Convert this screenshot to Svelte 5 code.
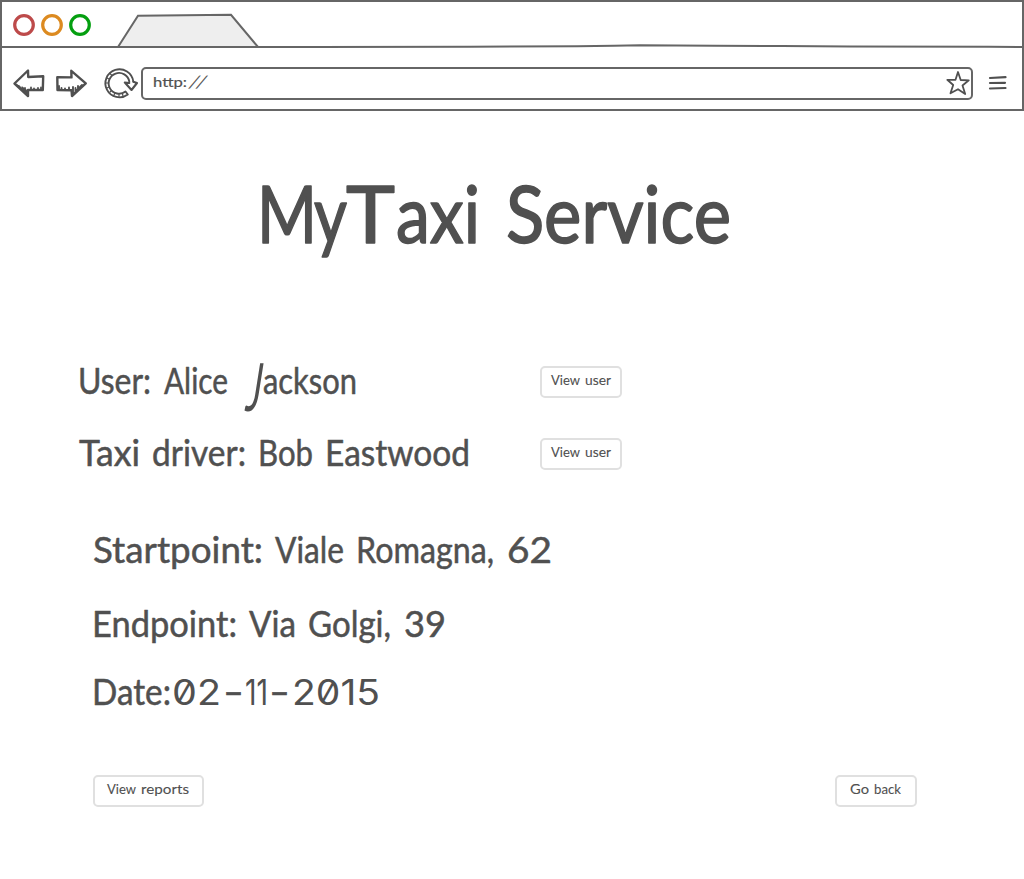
<script>
  const title = { h: 110, base: 78, size: 79, words: [['M', 257, 60], ['y', 314, 33], ['T', 346, 49], ['axi', 396, 84], ['Service', 506, 225]] };
  const people = [
    { words: [['User:', 78, 73], ['Alice', 164, 64], ['J', 241, 21, 'tall'], ['ackson', 263, 94]] },
    { words: [['Taxi', 79, 61], ['driver:', 152, 94], ['Bob', 258, 55], ['Eastwood', 325, 145]] }
  ];
  const facts = [
    { h: 74, words: [['Startpoint:', 93, 170], ['Viale', 275, 69], ['Romagna,', 356, 138], ['62', 507, 45]] },
    { h: 68, words: [['Endpoint:', 92, 145], ['Via', 249, 47], ['Golgi,', 308, 83], ['39', 404, 42]] },
    { h: 106, words: [['Date:', 92, 79], ['02', 172, 49, 'num'], ['-', 223, 21], ['11', 245, 23, 'num'], ['-', 269, 21], ['2015', 292, 88, 'num']] }
  ];
</script>

{#snippet line(words, h, base, size, stroke)}
  <svg class="line" width="1024" height={h} font-size={size} stroke-width={stroke}>
    {#each words as [word, x, len, kind]}
      {#if kind === 'tall'}
        <text transform="translate({x} {base + 17}) skewX(-9) scale(1 1.85)" x="3" y="0" textLength="15" lengthAdjust="spacingAndGlyphs" stroke-width="0">{word}</text>
      {:else}
        <text class={kind} {x} y={base} textLength={len} lengthAdjust="spacingAndGlyphs">{word}</text>
      {/if}
    {/each}
  </svg>
{/snippet}

{#snippet label(words, w)}
  <button style:width="{w}px">
    <svg class="label" width={w - 4} height="28" font-size="14" stroke-width="0.1">
      {#each words as [word, x, len]}
        <text x={x - 1} y="17" textLength={len} lengthAdjust="spacingAndGlyphs">{word}</text>
      {/each}
    </svg>
  </button>
{/snippet}

<div class="page">
  <header>
    <div class="tabs">
      <svg width="1020" height="46" viewBox="2 2 1020 46" fill="none">
        <g stroke-width="3.2">
          <circle cx="24" cy="25" r="9.3" stroke="#bd4a4a" />
          <circle cx="52" cy="25" r="9.3" stroke="#dc8a20" />
          <circle cx="80" cy="25" r="9.3" stroke="#049f10" />
        </g>
        <path d="M118 47 138 15.8 231 14.8 258 47" fill="#eee" stroke="#666" stroke-width="2" />
        <path d="M0 47H316L470 46.7 577 46.3 614 45.8 640 45.2 714 45.8 782 46.1 850 46.4 989 46.8 1024 47" stroke="#666" stroke-width="2" />
      </svg>
    </div>
    <div class="tools">
      <svg class="nav" width="128" height="40" viewBox="12 63 128 40" fill="none" stroke="#505050" stroke-width="2.4" stroke-linejoin="round" stroke-linecap="round">
        <path d="M14.500 83.500 28 70.500 28.200 77 43.200 76.300 42.800 90 28 90 28 96Z" />
        <path d="M17 85 27.500 95 27.500 91 22 87 22.500 90 19.500 86Z" fill="#505050" stroke-width="1.200" />
        <path d="M25 88V91M31 87.500V89M34 88.500V89.500M38 88V89M41 87.500V89" stroke-width="1.800" />
        <path d="M57.300 77.200 71.500 77.400 71.300 70.800 85.800 83.300 72 96 71.500 90.200 57.500 90Z" />
        <path d="M59 86V89M61.500 88V89M65 88.500V89M69 87.500V89M73 87V94M75.500 88V92M78 86V89M82 85 73.500 93.500" stroke-width="1.900" />
        <path d="M129.300 81.500A10.400 10.400 0 1 0 125.500 91.500L127.800 94.500A14 14 0 1 1 133.300 81.500" stroke-width="1.900" />
        <path d="M124.800 82.500 129.300 83M133.300 81.800 137 83 131.500 90 124.800 82.500" stroke-width="2.100" />
        <path d="M107 78 109 79M106 83H108M107 88 109 87M110 92 111.500 90.500M114 95 115 93M119 96.500V94.500M123 96 122.500 94M110 73.500 111.500 75" stroke-width="1.200" />
      </svg>
      <div class="address">
        <svg class="url" width="70" height="29" font-size="14" stroke-width="0.2">
          <text x="10" y="18" textLength="34" lengthAdjust="spacingAndGlyphs">http:</text>
          <text transform="translate(45 19) skewX(-24)" font-size="17" textLength="15" lengthAdjust="spacing">//</text>
        </svg>
        <svg width="26" height="29" viewBox="945 69 26 29" fill="none" stroke="#505050" stroke-width="1.800" stroke-linejoin="round">
          <path d="M958 72 960.700 80 968.800 80.300 962.500 85.500 965.200 94 958 89.200 950.500 93.300 953.200 85 947.300 79.800 955.500 79.800Z" />
        </svg>
      </div>
      <svg class="menu" width="20" height="20" viewBox="988 73 20 20" fill="none" stroke="#505050" stroke-width="2.200" stroke-linecap="round">
        <path d="M990 78 1005.500 77.200M990 83 1005 82.800M990 88.500 1005.500 88" />
      </svg>
    </div>
  </header>

  <h1>{@render line(title.words, title.h, title.base, title.size, 1.6)}</h1>

  <section class="people">
    {#each people as p}
      <div class="row">
        {@render line(p.words, 72, 48, 36, 0.5)}
        {@render label([['View', 10, 29], ['user', 44, 26]], 82)}
      </div>
    {/each}
  </section>

  <section class="facts">
    {#each facts as f}
      {@render line(f.words, f.h, 48, 36, 0.5)}
    {/each}
  </section>

  <footer>
    {@render label([['View', 13, 29], ['reports', 47, 48]], 111)}
    {@render label([['Go', 14, 19], ['back', 38, 27]], 82)}
  </footer>
</div>

<style>
  :global(body) { background: #fff; }
  .page {
    width: 1024px;
    height: 879px;
    overflow: hidden;
    display: flex;
    flex-direction: column;
    font-family: Lato, "Open Sans", sans-serif;
  }
  svg { display: block; flex: none; }
  .line, .url, .label { overflow: visible; }
  text { fill: #505050; stroke: #505050; stroke-linejoin: round; }
  .num { font-family: Inter, sans-serif; font-feature-settings: "zero" 1; font-size: 35px; stroke-width: 0; }
  header { box-sizing: border-box; height: 111px; border: 2px solid #666; }
  .tools { display: flex; align-items: center; height: 61px; padding-left: 10px; box-sizing: border-box; }
  .address {
    box-sizing: border-box;
    width: 832px;
    height: 33px;
    margin: 19px 0 0 1px;
    align-self: flex-start;
    border: 2px solid #666;
    border-radius: 5px;
    display: flex;
    justify-content: space-between;
  }
  .nav { margin-top: 9px; }
  .menu { margin: 9px 0 0 15px; }
  h1 { margin: 54px 0 0; font-weight: 400; }
  .people { padding-top: 71px; }
  .row { display: grid; grid-template-columns: 540px auto; justify-content: start; height: 72px; }
  .row > .line { margin-right: -484px; }
  .row button { margin-top: 20px; }
  button {
    box-sizing: border-box;
    height: 32px;
    padding: 0;
    border: 2px solid #e0e0e0;
    border-radius: 5px;
    background: #fff;
    font-family: inherit;
  }
  .facts { padding-top: 25px; }
  footer { display: flex; justify-content: space-between; width: 824px; padding: 12px 0 0 93px; }
</style>
